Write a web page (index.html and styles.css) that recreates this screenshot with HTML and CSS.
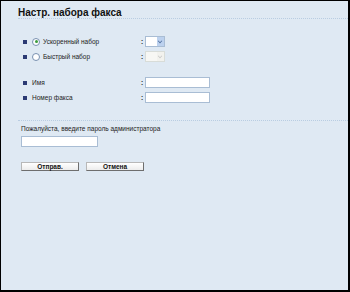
FILE: index.html
```html
<!DOCTYPE html>
<html>
<head>
    <title>Настр. набора факса</title>
    <link rel="stylesheet" href="styles.css">
</head>
<body>
    <div class="frame">
        <h1 class="title">Настр. набора факса</h1>
        <div class="rows">
            <div class="row">
                <span class="bullet"></span>
                <span class="radio checked"></span>
                <span class="label">Ускоренный набор</span>
                <span class="colon">:</span>
                <span class="select"><span class="arrow"></span></span>
            </div>
            <div class="row">
                <span class="bullet"></span>
                <span class="radio"></span>
                <span class="label">Быстрый набор</span>
                <span class="colon">:</span>
                <span class="select disabled"><span class="arrow"></span></span>
            </div>
            <div class="row gap">
                <span class="bullet"></span>
                <span class="label plain">Имя</span>
                <span class="colon">:</span>
                <span class="input"></span>
            </div>
            <div class="row">
                <span class="bullet"></span>
                <span class="label plain">Номер факса</span>
                <span class="colon">:</span>
                <span class="input"></span>
            </div>
        </div>
        <div class="password">
            <p class="hint">Пожалуйста, введите пароль администратора</p>
            <span class="input wide"></span>
        </div>
        <div class="buttons">
            <button>Отправ.</button>
            <button>Отмена</button>
        </div>
    </div>
</body>
</html>
```

FILE: styles.css
```css
html, body {
    margin: 0;
    height: 100%;
}

body {
    font-family: "Liberation Sans", Arial, sans-serif;
    font-size: 6.5px;
    color: #222;
}

.frame {
    box-sizing: border-box;
    height: 292px;
    background-color: #dfe9f3;
    border-top: 1px solid #000;
    border-left: 1px solid #000;
    border-right: 2px solid #000;
    border-bottom: 2px solid #000;
    padding-left: 17px;
}

.title {
    margin: 0;
    padding-top: 6px;
    height: 11px;
    font-size: 10px;
    line-height: 11px;
    font-weight: bold;
    color: #111;
    border-bottom: 1px dotted #b9cde2;
}

.rows {
    padding-top: 15px;
    padding-bottom: 15px;
    border-bottom: 1px dotted #b9cde2;
}

.row {
    display: flex;
    align-items: center;
    height: 15px;
    padding-left: 5px;
}

.row.gap {
    margin-top: 11px;
}

.bullet {
    width: 4px;
    height: 4px;
    background-color: #2b3a73;
    margin-right: 5px;
}

.radio {
    box-sizing: border-box;
    width: 8px;
    height: 8px;
    border: 1px solid #7890b0;
    border-radius: 50%;
    background-color: #fff;
    margin-right: 3px;
    display: flex;
    align-items: center;
    justify-content: center;
}

.radio.checked::after {
    content: "";
    width: 3px;
    height: 3px;
    border-radius: 50%;
    background-color: #3c9b3c;
}

.label {
    width: 98px;
}

.label.plain {
    width: 109px;
}

.colon {
    width: 4px;
    font-weight: bold;
}

.select {
    box-sizing: border-box;
    display: flex;
    justify-content: flex-end;
    width: 20px;
    height: 11px;
    background-color: #fff;
    border: 1px solid #a9bdd4;
}

.arrow {
    width: 7px;
    background-color: #bcd1ee;
    position: relative;
}

.arrow::after {
    content: "";
    position: absolute;
    left: 1px;
    top: 2px;
    width: 3px;
    height: 3px;
    border-right: 1px solid #4c6b9c;
    border-bottom: 1px solid #4c6b9c;
    transform: rotate(45deg) scale(0.8);
}

.select.disabled {
    background-color: #f7f7f4;
    border-color: #d8dcd8;
}

.select.disabled .arrow {
    background-color: #f2f2ee;
}

.select.disabled .arrow::after {
    border-color: #c8c8c8;
}

.input {
    box-sizing: border-box;
    display: block;
    width: 65px;
    height: 11px;
    background-color: #fff;
    border: 1px solid #a9bdd4;
}

.input.wide {
    width: 77px;
}

.password {
    padding-top: 3px;
    padding-left: 3px;
}

.hint {
    margin: 0 0 2px;
    line-height: 10px;
}

.buttons {
    display: flex;
    gap: 7px;
    padding-top: 15px;
    padding-left: 3px;
}

button {
    box-sizing: border-box;
    width: 58px;
    height: 9px;
    padding: 0;
    font-family: "Liberation Sans", Arial, sans-serif;
    font-size: 6.5px;
    font-weight: bold;
    line-height: 7px;
    color: #111;
    background: linear-gradient(#fff, #ececec);
    border: 1px solid #b8b8b8;
    border-right-color: #6e6e6e;
    border-bottom-color: #6e6e6e;
}
```
